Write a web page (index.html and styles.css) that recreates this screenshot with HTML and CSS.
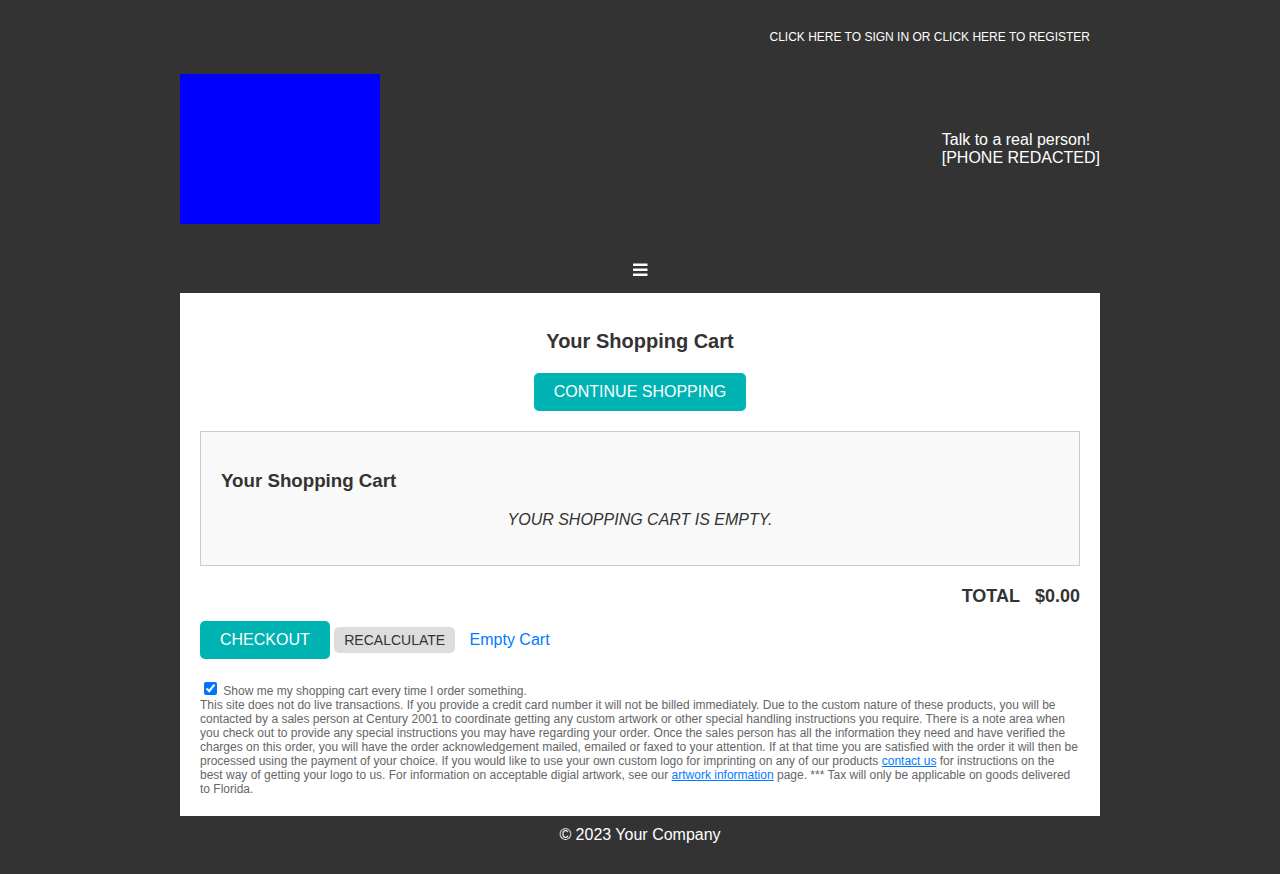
FILE: index.html
```html
<!DOCTYPE html>
<html lang="en">
<head>
<meta charset="utf-8">
<meta name="viewport" content="width=device-width, initial-scale=1">
<title>Your Shopping Cart</title>
<link rel="stylesheet" href="styles.css">
</head>
<body>
<div class="container">
  <div class="account">CLICK HERE TO SIGN IN OR CLICK HERE TO REGISTER</div>
  <header class="header">
    <div class="logo"></div>
    <div class="phone">Talk to a real person!<br>[PHONE REDACTED]</div>
  </header>
  <nav class="nav">
    <button class="menu" type="button" aria-label="Menu">
      <svg class="menu-icon" viewBox="0 0 14 16" aria-hidden="true">
        <g fill="currentColor">
          <rect x="0" y="1.6" width="14.5" height="2.4" rx="0.2"/>
          <rect x="0" y="6.6" width="14.5" height="2.4" rx="0.2"/>
          <rect x="0" y="11.6" width="14.5" height="2.4" rx="0.2"/>
        </g>
      </svg>
    </button>
  </nav>
  <main class="content">
    <h2 class="title">Your Shopping Cart</h2>
    <div class="continue"><button class="btn" type="button">CONTINUE SHOPPING</button></div>
    <section class="cart">
      <h3 class="cart-title">Your Shopping Cart</h3>
      <p class="cart-empty">YOUR SHOPPING CART IS EMPTY.</p>
    </section>
    <div class="total"><span>TOTAL</span><span>$0.00</span></div>
    <div class="actions">
      <button class="btn" type="button">CHECKOUT</button>
      <button class="btn-small" type="button">RECALCULATE</button>
      <a class="empty-link" href="#">Empty Cart</a>
    </div>
    <div class="notes">
      <input class="check" type="checkbox" id="show-cart" checked>
      <label for="show-cart">Show me my shopping cart every time I order something.</label>
      <br>
      This site does not do live transactions. If you provide a credit card number it will not be billed immediately. Due to the custom nature of these products, you will be contacted by a sales person at Century 2001 to coordinate getting any custom artwork or other special handling instructions you require. There is a note area when you check out to provide any special instructions you may have regarding your order. Once the sales person has all the information they need and have verified the charges on this order, you will have the order acknowledgement mailed, emailed or faxed to your attention. If at that time you are satisfied with the order it will then be processed using the payment of your choice. If you would like to use your own custom logo for imprinting on any of our products <a href="#">contact us</a> for instructions on the best way of getting your logo to us. For information on acceptable digial artwork, see our <a href="#">artwork information</a> page. *** Tax will only be applicable on goods delivered to Florida.
    </div>
  </main>
  <footer class="footer">© 2023 Your Company</footer>
</div>
</body>
</html>
```
FILE: styles.css
```css
* { box-sizing: border-box; }
body {
  margin: 0;
  background: #333;
  color: #fff;
  font-family: "Liberation Sans", Arial, sans-serif;
  font-size: 16px;
}
button { font-family: inherit; border: 0; cursor: pointer; }
.container { max-width: 960px; margin: 0 auto; padding: 20px; }
.account { padding: 10px; font-size: 12px; line-height: 14px; text-align: right; }
.header { display: flex; justify-content: space-between; align-items: center; padding: 20px 0; }
.logo { width: 200px; height: 150px; background: #00f; }
.phone { line-height: 18px; }
.nav { display: flex; justify-content: center; padding: 10px; }
.menu { padding: 8px 8px 5px; background: none; color: #fff; line-height: 0; }
.menu-icon { width: 14px; height: 16px; overflow: visible; }
.content { padding: 20px; background: #fff; color: #333; }
.title { margin: 16px 0 20px; font-size: 20px; line-height: 24px; text-align: center; }
.continue { text-align: center; }
.btn {
  padding: 10px 20px;
  border-radius: 5px;
  background: #00b3b3;
  color: #fff;
  font-size: 16px;
  line-height: 18px;
}
.cart { margin: 20px 0; padding: 20px; border: 1px solid #ccc; background: #f9f9f9; }
.cart-title { margin: 18px 0 19px; line-height: 22px; }
.cart-empty { margin: 16px 0; line-height: 18px; font-style: italic; text-align: center; }
.total { display: flex; justify-content: flex-end; gap: 15px; font-size: 18px; line-height: 20px; font-weight: bold; }
.actions { margin: 15px 0 20px; }
.btn-small {
  padding: 5px 10px;
  border-radius: 5px;
  background: #ddd;
  color: #333;
  font-size: 14px;
  line-height: 16px;
}
.empty-link { margin-left: 10px; color: #007bff; text-decoration: none; }
.notes { color: #666; font-size: 12px; line-height: 14px; }
.notes a { color: #007bff; }
.check { margin: 3px 3px 3px 4px; }
.footer { padding: 10px; line-height: 18px; text-align: center; }
```
